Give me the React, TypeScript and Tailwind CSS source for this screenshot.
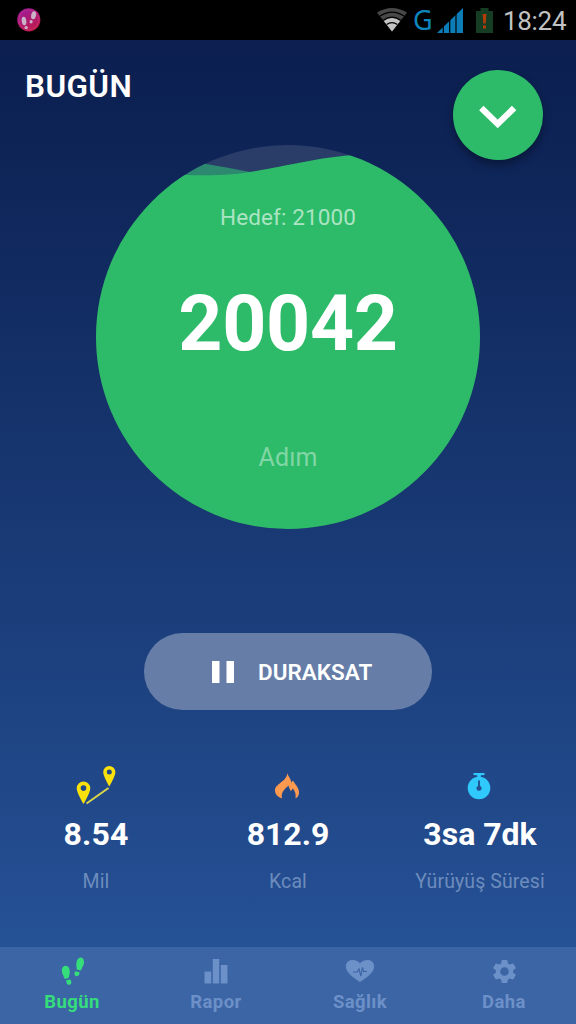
import type { ReactNode } from 'react'

type Stat = { icon: ReactNode; value: string; label: string; valueClass: string; labelClass: string }
type Tab = { icon: ReactNode; label: string; active?: boolean }

function StatusBar() {
  return (
    <div className="flex h-10 shrink-0 items-center bg-black pl-4 pr-[9px]">
      <svg width="26" height="26" viewBox="0 0 26 26">
        <defs>
          <linearGradient id="badge" x1="0.2" y1="0" x2="0.7" y2="1">
            <stop offset="0" stopColor="#9c1a9c" />
            <stop offset="1" stopColor="#c01a48" />
          </linearGradient>
        </defs>
        <circle cx="12.8" cy="12.8" r="11.6" fill="url(#badge)" />
        <circle cx="12.8" cy="12.8" r="9.8" fill="none" stroke="#d04a86" strokeWidth="0.7" opacity="0.6" />
        <g fill="#c9b3c6">
          <ellipse cx="8" cy="14" rx="2.3" ry="4.3" transform="rotate(-8 8 14)" />
          <ellipse cx="10.2" cy="20.6" rx="1.7" ry="1.7" />
          <ellipse cx="17.6" cy="8.2" rx="2.4" ry="4.1" transform="rotate(12 17.6 8.2)" />
          <ellipse cx="15.1" cy="14.8" rx="1.6" ry="1.8" />
        </g>
      </svg>
      <div className="ml-auto flex items-center">
        <svg width="30" height="24" viewBox="0 0 30 24" fill="none">
          <path d="M15 23.5 0 4.5Q15-4.5 30 4.5Z" fill="#484848" />
          <path d="M15 23.5 6.8 13Q15 7 23.2 13Z" fill="#c4c4c4" />
          <path d="M3 8.1Q15.2 0 27 8.1M6.2 12.3Q15 5.8 23.8 12.3M9.6 16.6Q15 12.6 20.4 16.6" stroke="#000" strokeWidth="1.2" />
        </svg>
        <span className="ml-1.5 w-[19px] font-['Noto_Sans',sans-serif] text-[27px] leading-[38px] text-[#0d86bd]">G</span>
        <svg className="ml-[5px]" width="26" height="25" viewBox="0 0 26 25">
          <path d="M0 25 26 0V25Z" fill="#0d7db8" />
          <path d="M6.3 0V25M12.7 0V25M19 0V25" stroke="#000" strokeWidth="1.2" />
        </svg>
        <svg className="ml-[13px]" width="17" height="25" viewBox="0 0 17 25">
          <path d="M0 3H4.5V0H12.5V3H17V25H0Z" fill="#143d23" />
          <path d="M6.6 6H10.4L9.7 15.5H7.3ZM7 17.5H10V20.5H7Z" fill="#b03c0c" />
        </svg>
        <span className="ml-[10px] w-[64px] whitespace-nowrap pt-px text-[26px] leading-10 tracking-[-0.3px] text-[#c2c2c2]">18:24</span>
      </div>
    </div>
  )
}

function Header() {
  return (
    <header className="flex h-[105px] shrink-0 items-start justify-between pl-[25px] pr-[33px]">
      <h1 className="mt-[27px] text-[31.5px] font-semibold leading-10 tracking-[0.4px] text-white">BUGÜN</h1>
      <button
        aria-label="Aç"
        className="mt-[30px] flex size-[90px] shrink-0 items-center justify-center rounded-full bg-[#2dbb69] shadow-[0_5px_8px_rgba(0,0,0,0.35)]"
      >
        <svg width="40" height="26" viewBox="0 0 40 26" className="mt-1.5">
          <path d="M3.300 3 19.700 19 36.100 3" fill="none" stroke="#fff" strokeWidth="6.200" />
        </svg>
      </button>
    </header>
  )
}

function StepDial() {
  return (
    <section className="relative mx-auto size-96 shrink-0 overflow-hidden rounded-full bg-[#2a3c68]">
      <svg className="absolute inset-0" width="384" height="384" viewBox="0 0 384 384">
        <path d="M60 12Q110 18 154 27L154 40H60Z" fill="#2d8870" />
        <path d="M0 22C85 32 125 33 165 25C200 19 220 13 258 10C300 4 350 2 384 2V384H0Z" fill="#2dbb69" />
      </svg>
      <div className="relative flex flex-col items-center">
        <p className="mt-14 text-[22.500px] leading-8 tracking-[0.100px] text-[#abe4c3]">Hedef: 21000</p>
        <p className="mt-[45px] text-[77px] font-bold leading-[92px] tracking-[-0.300px] text-white">20042</p>
        <p className="mt-[72px] text-[25px] leading-8 tracking-[0.100px] text-[#81d6a5]">Adım</p>
      </div>
    </section>
  )
}

function RouteIcon() {
  return (
    <svg width="40" height="40" viewBox="0 0 40 40">
      <g fill="#f9e10e" fillRule="evenodd">
        <path d="M7.5 15.5A6.8 6.8 0 0 0 .7 22.3C.7 27 7.5 38 7.5 38S14.300 27 14.300 22.300A6.800 6.800 0 0 0 7.500 15.500ZM7.500 19.300A2.800 2.800 0 1 1 7.500 24.900A2.800 2.800 0 1 1 7.500 19.300Z" />
        <path d="M33.300 0A6.100 6.100 0 0 0 27.200 6.100C27.200 10.500 33.300 20.500 33.300 20.500S39.400 10.500 39.400 6.100A6.100 6.100 0 0 0 33.300 0ZM33.300 3.500A2.500 2.500 0 1 1 33.300 8.500A2.500 2.500 0 1 1 33.300 3.500Z" />
      </g>
      <path d="M10.500 37.500 32.500 22" stroke="#d9d748" strokeWidth="2" />
    </svg>
  )
}

function FlameIcon() {
  return (
    <svg width="26" height="26" viewBox="0 0 26 26" className="mr-0.5">
      <path
        d="M13.500 0C14 4 17 5 17.200 9.500L19 7.500C20.500 11 25 14 25 19.500C25 22.500 23.500 24.500 21.500 25.500C22.200 21 21 18 18.800 15.500L16.800 18.300C16 16.500 15 14.500 14.300 12.500C12 15.500 6.500 18.500 8 25.500C3.500 24 1 21 1 17.500C1 10.500 12.500 9 13.500 0Z"
        fill="#fd9a50"
      />
    </svg>
  )
}

function StopwatchIcon() {
  return (
    <svg width="24" height="27" viewBox="0 0 24 27" className="mr-0.5">
      <circle cx="12" cy="15" r="11.300" fill="#30c9fb" />
      <path d="M6.500 0H17.500V2L13.800 2.300V5H10.200V2.300L6.500 2Z" fill="#30c9fb" />
      <circle cx="12" cy="15.300" r="2.500" fill="#235092" />
      <path d="M12 7.500V15" stroke="#235092" strokeWidth="1.900" />
    </svg>
  )
}

function StepsIcon() {
  return (
    <svg width="24" height="28" viewBox="0 0 24 28" fill="currentColor" className="ml-px">
      <path d="M.8 13.500C.8 10.500 2.500 8.700 4.700 8.700C7.300 8.700 8.800 11.500 8.800 15C8.800 17 8 19 7.600 21L3.700 22C3 19 .8 17 .8 13.500Z" />
      <path d="M5.200 23.300 9.500 22.500C10.500 24 10.800 27.300 8.500 27.800C6 28.200 5.300 26 5.200 23.300Z" />
      <path d="M20 .5C22.300.8 23.300 3.200 23 6C22.700 9 20.700 10.500 20 13.500L15.700 12.500C15.800 10.500 15 8.500 15.400 6C15.800 2.500 17.500.2 20 .5Z" />
      <path d="M14.200 14.200 18.600 15.300C18.600 17.500 17.500 19.500 15.500 19.200C13 18.800 13 16.500 14.200 14.200Z" />
    </svg>
  )
}

function ChartIcon() {
  return (
    <svg width="24" height="26" viewBox="0 0 24 26" fill="currentColor">
      <path d="M.5 13.500H7.200V25.500H.5ZM8.800 1H15.200V25.500H8.800ZM16.800 7H23.500V25.500H16.800Z" />
    </svg>
  )
}

function HeartIcon() {
  return (
    <svg width="30" height="24" viewBox="0 0 30 24">
      <path
        d="M15 23C9 19 .8 13.500.8 7.500C.8 3.500 3.700 1 7.500 1C11 1 13.500 2.500 15 4.500C16.500 2.500 19 1 22.500 1C26.300 1 29.200 3.500 29.200 7.500C29.200 13.500 21 19 15 23Z"
        fill="currentColor"
      />
      <path d="M8 13H12.200L14 10 15.800 17 17.500 8.500 18.500 12.500H22" fill="none" stroke="#3b65a5" strokeWidth="1.100" />
    </svg>
  )
}

function GearIcon() {
  return (
    <svg width="29" height="29" viewBox="0 0 24 24" fill="currentColor">
      <path d="M19.140 12.940c.04-.3.06-.61.06-.94 0-.32-.02-.64-.07-.94l2.030-1.580c.18-.14.23-.41.12-.61l-1.920-3.320c-.12-.22-.37-.29-.59-.22l-2.390.96c-.5-.38-1.030-.7-1.620-.94l-.36-2.540c-.04-.24-.24-.41-.48-.41h-3.840c-.24 0-.43.17-.47.41l-.36 2.540c-.59.24-1.130.57-1.620.94l-2.390-.96c-.22-.08-.47 0-.59.22L2.740 8.870c-.12.21-.08.47.12.61l2.030 1.580c-.05.3-.09.63-.09.94s.02.64.07.94l-2.030 1.580c-.18.14-.23.41-.12.61l1.920 3.320c.12.22.37.29.59.22l2.390-.96c.5.38 1.030.7 1.620.94l.36 2.540c.05.24.24.41.48.41h3.840c.24 0 .44-.17.47-.41l.36-2.540c.59-.24 1.130-.56 1.620-.94l2.390.96c.22.08.47 0 .59-.22l1.920-3.320c.12-.22.07-.47-.12-.61l-2.010-1.580zM12 15.600A3.600 3.600 0 1 1 12 8.400A3.600 3.600 0 1 1 12 15.600z" />
    </svg>
  )
}

const stats: Stat[] = [
  { icon: <RouteIcon />, value: '8.54', label: 'Mil', valueClass: 'tracking-[0.1px]', labelClass: 'tracking-[0.1px]' },
  { icon: <FlameIcon />, value: '812.9', label: 'Kcal', valueClass: 'tracking-[0px]', labelClass: 'tracking-[0.1px]' },
  { icon: <StopwatchIcon />, value: '3sa 7dk', label: 'Yürüyüş Süresi', valueClass: 'tracking-normal', labelClass: 'tracking-[0.1px]' },
]

const tabs: Tab[] = [
  { icon: <StepsIcon />, label: 'Bugün', active: true },
  { icon: <ChartIcon />, label: 'Rapor' },
  { icon: <HeartIcon />, label: 'Sağlık' },
  { icon: <GearIcon />, label: 'Daha' },
]

export default function App() {
  return (
    <div className="flex h-[1024px] w-[576px] flex-col overflow-hidden bg-linear-to-b from-[#0a1c4c] to-[#28569c] font-[Roboto,sans-serif]">
      <StatusBar />
      <Header />
      <StepDial />

      <button className="mx-auto mt-[104px] flex h-[77px] w-72 shrink-0 items-center rounded-full bg-[#667da8] pl-[68px]">
        <svg width="22" height="22" viewBox="0 0 22 22" fill="#fff">
          <path d="M0 0H7.500V22H0ZM14.500 0H22V22H14.500Z" />
        </svg>
        <span className="ml-6 text-[22.500px] font-semibold leading-8 text-white">DURAKSAT</span>
      </button>

      <section className="mt-[56px] grid grid-cols-3">
        {stats.map(({ icon, value, label, valueClass, labelClass }) => (
          <div key={label} className="flex flex-col items-center whitespace-nowrap">
            <div className="flex h-10 items-center">{icon}</div>
            <p className={`mt-2 text-[32px] font-bold leading-10 text-white ${valueClass}`}>{value}</p>
            <p className={`mt-[14px] text-[19.500px] leading-7 text-[#6d8cbd] ${labelClass}`}>{label}</p>
          </div>
        ))}
      </section>

      <nav className="mt-auto grid h-[77px] shrink-0 grid-cols-4 bg-[#3c65a5]">
        {tabs.map(({ icon, label, active }) => (
          <a key={label} className={`flex flex-col items-center ${active ? 'text-[#35dd7b]' : 'text-[#6c90c8]'}`}>
            <span className="mt-[9px] flex h-[30px] items-center">{icon}</span>
            <span className="mt-1 text-[18.500px] font-bold leading-6 tracking-[0.400px]">{label}</span>
          </a>
        ))}
      </nav>
    </div>
  )
}
